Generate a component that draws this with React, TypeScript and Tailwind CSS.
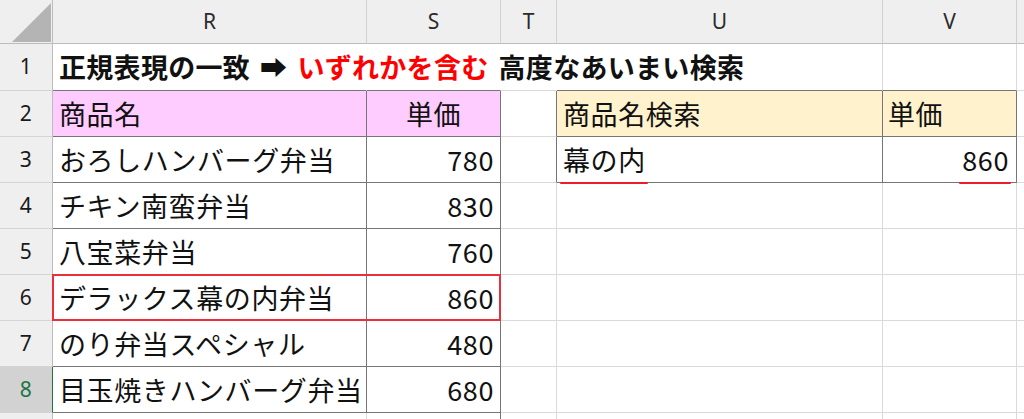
import type { ReactNode } from "react";

const FONT = `font-["Noto_Sans_CJK_JP","DejaVu_Sans",sans-serif]`;

// border colours, written out so tailwind picks them up
const LR = "border-r-[#dadada]";
const DR = "border-r-[#767676]";
const NR = "border-r-transparent";
const LB = "border-b-[#dadada]";
const DB = "border-b-[#767676]";

function Cell({
  w,
  r = LR,
  b = LB,
  bg = "",
  align = "justify-start",
  className = "",
  children,
}: {
  w: string;
  r?: string;
  b?: string;
  bg?: string;
  align?: string;
  className?: string;
  children?: ReactNode;
}) {
  return (
    <div
      className={`${w} shrink-0 flex items-center border-r border-b ${r} ${b} ${bg} ${align} px-[6px] pt-[1px] whitespace-nowrap ${className}`}
    >
      {children}
    </div>
  );
}

function RowHead({ n, active = false }: { n?: number; active?: boolean }) {
  return (
    <div
      className={`w-[53px] shrink-0 flex items-center justify-center border-r border-b border-b-[#d4d4d4] font-["Noto_Sans",sans-serif] text-[21px] ${
        active
          ? "bg-[#d2d2d2] text-[#217346] border-r-[#217346]"
          : "bg-[#efefef] text-[#1a1a1a] border-r-[#bcbcbc]"
      }`}
    >
      {n}
    </div>
  );
}

function Mark({ children }: { children: ReactNode }) {
  // 赤い下線（注釈）
  return (
    <span className="relative">
      {children}
      <span className="absolute -left-[3px] -right-[2px] -bottom-[4px] h-[2px] rounded-full bg-[#ec1c2a]" />
    </span>
  );
}

const ITEMS: [string, number][] = [
  ["おろしハンバーグ弁当", 780],
  ["チキン南蛮弁当", 830],
  ["八宝菜弁当", 760],
  ["デラックス幕の内弁当", 860],
  ["のり弁当スペシャル", 480],
  ["目玉焼きハンバーグ弁当", 680],
];

const COLS: [string, string][] = [
  ["R", "w-[314px]"],
  ["S", "w-[134px]"],
  ["T", "w-[56px]"],
  ["U", "w-[326px]"],
  ["V", "w-[134px]"],
];

export default function App() {
  return (
    <div className={`w-[1024px] h-[419px] overflow-hidden bg-white text-[27px] tracking-[0.6px] text-[#111] ${FONT}`}>
      {/* 列見出し */}
      <div className="flex h-[44px]">
        <div className="w-[53px] shrink-0 border-r border-b border-r-[#bcbcbc] border-b-[#bcbcbc] bg-[#efefef]">
          <svg width="52" height="43" viewBox="0 0 52 43">
            <polygon points="12,42 51,42 51,3" fill="#b4b4b4" />
          </svg>
        </div>
        {COLS.map(([c, w]) => (
          <div
            key={c}
            className={`${w} shrink-0 flex items-center justify-center border-r border-b border-r-[#d0d0d0] border-b-[#bcbcbc] bg-[#efefef] font-["Noto_Sans",sans-serif] text-[21px] tracking-normal text-[#2a2a2a]`}
          >
            {c}
          </div>
        ))}
        <div className="flex-1 border-b border-b-[#bcbcbc] bg-[#efefef]" />
      </div>

      {/* 1: タイトル */}
      <div className="flex h-[47px]">
        <RowHead n={1} />
        <Cell w="w-[314px]" r={NR} b={DB} className="font-bold overflow-visible tracking-[0.3px]">
          <span>正規表現の一致</span>
          <span className="ml-[10px] mr-[10px]">➡</span>
          <span className="text-[#ff0000]">いずれかを含む</span>
          <span className="ml-[10px]">高度なあいまい検索</span>
        </Cell>
        <Cell w="w-[134px]" r={NR} b={DB} />
        <Cell w="w-[56px]" r={NR} />
        <Cell w="w-[326px]" b={DB} />
        <Cell w="w-[134px]" b={DB} />
        <div className="flex-1 border-b border-b-[#dadada]" />
      </div>

      {/* 2: 見出し */}
      <div className="flex h-[46px]">
        <RowHead n={2} />
        <Cell w="w-[314px]" r={DR} b={DB} bg="bg-[#ffccff]">
          商品名
        </Cell>
        <Cell w="w-[134px]" r={DR} b={DB} bg="bg-[#ffccff]" align="justify-center">
          単価
        </Cell>
        <Cell w="w-[56px]" r={DR} />
        <Cell w="w-[326px]" r={DR} b={DB} bg="bg-[#fff2cc]">
          商品名検索
        </Cell>
        <Cell w="w-[134px]" r={DR} b={DB} bg="bg-[#fff2cc]" className="!px-[5px]">
          単価
        </Cell>
        <div className="flex-1 border-b border-b-[#dadada]" />
      </div>

      {/* 3〜8: データ */}
      {ITEMS.map(([name, price], i) => {
        const row = i + 3;
        return (
          <div key={row} className="flex h-[46px]">
            <RowHead n={row} active={row === 8} />
            <Cell w="w-[314px]" r={DR} b={DB} className="relative overflow-visible">
              {name}
              {row === 6 && (
                <span className="absolute -top-px -left-px w-[449px] h-[47px] border-2 border-[#e8303a] pointer-events-none" />
              )}
            </Cell>
            <Cell w="w-[134px]" r={DR} b={DB} align="justify-end">
              {price}
            </Cell>
            <Cell w="w-[56px]" r={row === 3 ? DR : LR} />
            {row === 3 ? (
              <>
                <Cell w="w-[326px]" r={DR} b={DB}>
                  <Mark>幕の内</Mark>
                </Cell>
                <Cell w="w-[134px]" r={DR} b={DB} align="justify-end" className="!pr-[7px]">
                  <Mark>860</Mark>
                </Cell>
              </>
            ) : (
              <>
                <Cell w="w-[326px]" />
                <Cell w="w-[134px]" />
              </>
            )}
            <div className="flex-1 border-b border-b-[#dadada]" />
          </div>
        );
      })}

      {/* 9: 見切れ */}
      <div className="flex h-[46px]">
        <RowHead />
        <Cell w="w-[314px]" />
        <Cell w="w-[134px]" r={DR} />
        <Cell w="w-[56px]" />
        <Cell w="w-[326px]" />
        <Cell w="w-[134px]" />
      </div>
    </div>
  );
}
